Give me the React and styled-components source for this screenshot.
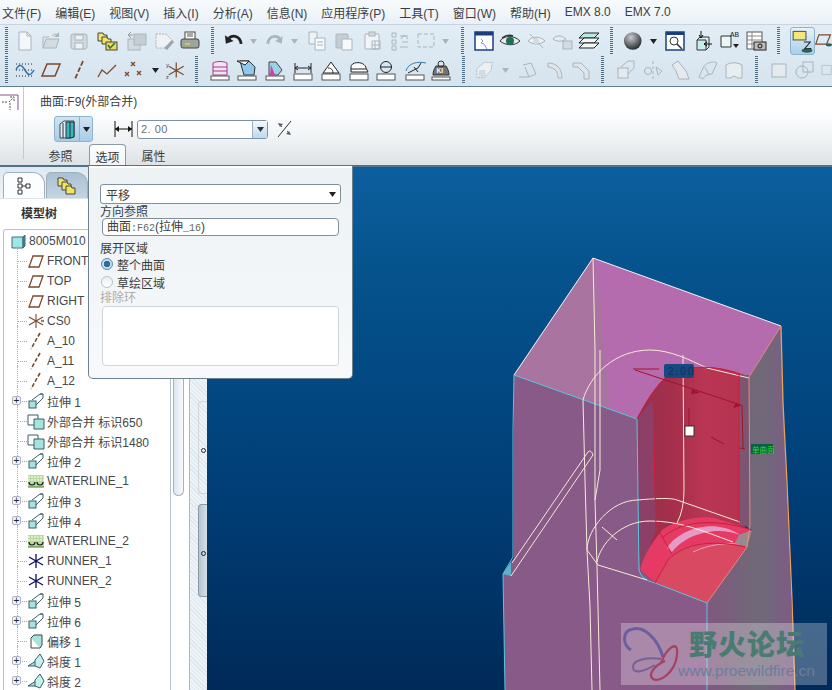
import React from 'react';
import styled, { createGlobalStyle } from 'styled-components';

const GlobalStyle = createGlobalStyle`
  html, body { margin: 0; padding: 0; background: #fff; }
  body { font-family: "Liberation Sans", "Noto Sans CJK SC", sans-serif; }
`;

const Page = styled.div`
  width: 832px;
  height: 690px;
  position: relative;
  overflow: hidden;
  display: flex;
  flex-direction: column;
  font-size: 12px;
  color: #3c3f42;
`;

const MenuBar = styled.div`
  height: 25px;
  flex: none;
  display: flex;
  align-items: center;
  gap: 14px;
  padding-left: 2px;
  box-sizing: border-box;
  background: linear-gradient(#f8fbfd, #e9f0f6);
  border-bottom: 1px solid #c4d4e1;
  white-space: nowrap;
`;

const ToolArea = styled.div`
  height: 62px;
  flex: none;
  box-sizing: border-box;
  padding-top: 1px;
  background: linear-gradient(#e2edf5, #d6e4ef);
  border-bottom: 1px solid #5f7d91;
  display: flex;
  flex-direction: column;
  overflow: hidden;
`;

const ToolRow = styled.div`
  height: 29px;
  flex: none;
  display: flex;
  align-items: center;
  white-space: nowrap;
`;

const Grip = styled.div`
  flex: none;
  width: ${p => p.$w}px;
  height: 27px;
  display: flex;
  justify-content: center;
  &::before {
    content: '';
    width: 3px;
    height: 27px;
    background: repeating-linear-gradient(#4f6f86 0 1px, transparent 1px 2px);
  }
`;

const Tool = styled.div`
  flex: none;
  width: ${p => p.$w}px;
  height: 26px;
  display: flex;
  align-items: center;
  justify-content: center;
`;

const ToolActive = styled(Tool)`
  & > svg {
    background: linear-gradient(#e8f2fa, #a9cfe9);
    border: 1px solid #8eb2cb;
    border-radius: 3px;
  }
`;

const Dashboard = styled.div`
  height: 80px;
  flex: none;
  position: relative;
  display: flex;
  background: linear-gradient(#fff 0, #fff 30%, #eef1f3 70%, #dde2e5 100%);
  border-bottom: 2px solid #4f7289;
  box-sizing: border-box;
`;

const DashCorner = styled.div`
  width: 24px;
  flex: none;
  height: 72px;
  border-right: 1px solid #c3c9cd;
  box-sizing: border-box;
  padding-top: 6px;
`;

const DashBody = styled.div`
  flex: 1;
  display: flex;
  flex-direction: column;
  padding-left: 16px;
`;

const DashTitle = styled.div`
  height: 28px;
  display: flex;
  align-items: center;
  box-sizing: border-box;
`;

const DashControls = styled.div`
  height: 30px;
  display: flex;
  align-items: center;
  padding-left: 14px;
`;

const SplitButton = styled.div`
  width: 39px;
  height: 26px;
  box-sizing: border-box;
  border: 1px solid #8fb3cc;
  border-radius: 3px;
  background: linear-gradient(#cfe3f2, #a8cde8);
  display: flex;
  align-items: center;
  & > span {
    width: 12px;
    height: 24px;
    border-left: 1px solid #8fb3cc;
    display: flex;
    align-items: center;
    justify-content: center;
    margin-left: auto;
  }
`;

const DimIcon = styled.div`
  margin-left: 21px;
  width: 19px;
  display: flex;
`;

const ValueInput = styled.div`
  margin-left: 4px;
  width: 131px;
  height: 19px;
  box-sizing: border-box;
  border: 1px solid #7d93a3;
  border-radius: 3px;
  background: #fff;
  display: flex;
  align-items: center;
  padding-left: 3px;
  font-size: 11px;
  color: #6a6f73;
  letter-spacing: 0.5px;
`;

const InputDrop = styled.span`
  margin-left: auto;
  width: 14px;
  height: 17px;
  border-left: 1px solid #9fb2c0;
  background: linear-gradient(#f4f9fc, #bcd9ee);
  display: flex;
  align-items: center;
  justify-content: center;
`;

const FlipIcon = styled.div`
  margin-left: 8px;
  display: flex;
`;

const DashTabs = styled.div`
  display: flex;
  height: 20px;
  margin-top: 1px;
  align-items: flex-end;
`;

const DashTab = styled.div`
  width: ${p => p.$w}px;
  height: 21px;
  box-sizing: border-box;
  text-align: center;
  line-height: 26px;
  margin-right: ${p => p.$gap || 0}px;
  ${p => p.$on && `
    background: linear-gradient(#fff, #f1f4f6);
    border: 1px solid #8b9aa5;
    border-bottom: 0;
    border-radius: 4px 4px 0 0;
    color: #33363a;
    position: relative;
    z-index: 3;
  `}
`;

const Work = styled.div`
  flex: 1;
  min-height: 0;
  display: flex;
`;

const Navigator = styled.div`
  width: 190px;
  flex: none;
  display: flex;
  flex-direction: column;
  background: #fff;
  border-right: 1px solid #a9b8c3;
  box-sizing: border-box;
`;

const NavTabs = styled.div`
  height: 32px;
  flex: none;
  display: flex;
  align-items: flex-end;
  padding-left: 3px;
  gap: 1px;
  background: linear-gradient(#dfe9f1, #edf2f6);
  border-bottom: 1px solid #dbe3ea;
  box-sizing: border-box;
`;

const NavTab = styled.div`
  width: ${p => p.$w}px;
  height: 26px;
  box-sizing: border-box;
  border: 1px solid #9fb0bd;
  border-bottom: 0;
  border-radius: 5px 12px 0 0;
  background: ${p => (p.$on ? '#fbfdfe' : 'linear-gradient(#a9c0d2, #c4d5e2)')};
  display: flex;
  align-items: center;
  justify-content: center;
`;

const NavTitle = styled.div`
  height: 30px;
  flex: none;
  padding-left: 21px;
  font-weight: bold;
  line-height: 30px;
  color: #333;
`;

const NavBody = styled.div`
  flex: 1;
  min-height: 0;
  display: flex;
`;

const TreeBox = styled.div`
  width: 168px;
  margin-left: 3px;
  flex: none;
  box-sizing: border-box;
  border: 1px solid #b4c2cc;
  border-bottom: 0;
  border-radius: 3px 0 0 0;
  padding-top: 1px;
  overflow: hidden;
`;

const TreeRow = styled.div`
  height: 20px;
  display: flex;
  align-items: center;
  position: relative;
  white-space: nowrap;
  padding-left: ${p => (p.$root ? 5 : 23)}px;
  &::before {
    content: '';
    display: ${p => (p.$root ? 'none' : 'block')};
    position: absolute;
    left: 13px;
    top: 10px;
    width: 10px;
    border-top: 1px dotted #a9a9a9;
  }
  &::after {
    content: '';
    display: ${p => (p.$root ? 'none' : 'block')};
    position: absolute;
    left: 13px;
    top: -5px;
    height: 20px;
    border-left: 1px dotted #b5b5b5;
    z-index: 0;
  }
`;

const Expander = styled.span`
  position: absolute;
  left: 8px;
  top: 5px;
  width: 9px;
  height: 9px;
  box-sizing: border-box;
  border: 1px solid #a9b7c2;
  border-radius: 2px;
  background: #eef3f7;
  z-index: 1;
  font-size: 10px;
  line-height: 7px;
  text-align: center;
  color: #222;
`;

const TreeIcon = styled.span`
  width: 18px;
  height: 18px;
  flex: none;
  display: flex;
  margin-right: 2px;
`;

const TreeText = styled.span`
  color: #44484b;
`;

const ScrollTrack = styled.div`
  flex: 1;
  padding-left: 2px;
`;

const ScrollThumb = styled.div`
  width: 11px;
  height: 266px;
  margin-top: 1px;
  box-sizing: border-box;
  border: 1px solid #a5b3bd;
  border-top: 0;
  border-radius: 0 0 6px 6px;
  background: linear-gradient(90deg, #dbe7ef, #f7fafc);
`;

const Sash = styled.div`
  width: 17px;
  flex: none;
  background: repeating-linear-gradient(45deg, #dbe6ee 0 1px, #edf3f7 1px 3px);
  position: relative;
`;

const SashPanel = styled.div`
  position: absolute;
  left: 8px;
  right: 0;
  top: ${p => p.$top}px;
  height: ${p => p.$h}px;
  box-sizing: border-box;
  border: 1px solid ${p => (p.$dark ? '#8b99a5' : '#cdd8e0')};
  border-right: 0;
  border-radius: 4px 0 0 4px;
  background: ${p => (p.$dark ? 'linear-gradient(90deg, #b6c4cf, #d5e0e8)' : 'transparent')};
  &::after {
    content: '';
    position: absolute;
    left: 2px;
    top: 46px;
    width: 3px;
    height: 3px;
    border: 1px solid #223;
    border-radius: 50%;
  }
`;

const Viewport = styled.div`
  flex: 1;
  position: relative;
  background: linear-gradient(#0c5f9e 0, #05538d 20%, #013f78 60%, #002a58 100%);
  overflow: hidden;
`;

const ModelLayer = styled.div`
  position: absolute;
  left: 207px;
  top: 168px;
  z-index: 1;
  & > svg { display: block; }
`;

const Watermark = styled.div`
  position: absolute;
  left: 621px;
  top: 623px;
  width: 206px;
  height: 62px;
  background: rgba(255, 255, 255, 0.28);
  display: flex;
  z-index: 4;
`;

const WaterLogo = styled.div`
  width: 68px;
  flex: none;
  display: flex;
`;

const WaterText = styled.div`
  display: flex;
  flex-direction: column;
  padding-top: 3px;
`;

const WaterTitle = styled.div`
  font-size: 28px;
  font-weight: 900;
  line-height: 34px;
  letter-spacing: 1px;
  color: #4a7b72;
  font-family: "Noto Sans CJK SC", sans-serif;
`;

const WaterUrl = styled.div`
  font-size: 15.5px;
  line-height: 18px;
  margin-top: 2px;
  margin-left: -11px;
  color: #6d7c9c;
`;

const OptionsPopup = styled.div`
  position: absolute;
  left: 88px;
  top: 166px;
  width: 265px;
  height: 213px;
  box-sizing: border-box;
  padding: 18px 11px 0 11px;
  background: linear-gradient(#edf2f5, #f7f9fa);
  border: 1px solid #70818e;
  border-top: 0;
  border-radius: 0 0 5px 5px;
  box-shadow: inset 0 2px 0 #fff;
  z-index: 2;
  display: flex;
  flex-direction: column;
  color: #3a3d40;
`;

const SelectBox = styled.div`
  height: 20px;
  flex: none;
  box-sizing: border-box;
  border: 1px solid #7f8f9b;
  border-radius: 3px;
  background: #fff;
  display: flex;
  align-items: center;
  justify-content: space-between;
  padding: 0 4px 0 5px;
`;

const FieldLabel = styled.div`
  height: 14px;
  line-height: 16px;
  margin-top: ${p => p.$top || 0}px;
  color: ${p => (p.$muted ? '#a9adb0' : 'inherit')};
`;

const RefInput = styled.div`
  height: 18px;
  flex: none;
  margin: 0 2px;
  box-sizing: border-box;
  border: 1px solid #7f8f9b;
  border-radius: 4px;
  background: #fff;
  padding-left: 4px;
  line-height: 16px;
  & > em {
    font-style: normal;
    font-family: "Liberation Mono", monospace;
    font-size: 10px;
    color: #666;
  }
`;

const RadioRow = styled.div`
  height: 18px;
  display: flex;
  align-items: center;
  gap: 4px;
  padding-left: 1px;
`;

const Radio = styled.span`
  width: 12px;
  height: 12px;
  box-sizing: border-box;
  border-radius: 50%;
  border: 1px solid ${p => (p.$on ? '#5b8cab' : '#b4c2cc')};
  background: ${p =>
    p.$on ? 'radial-gradient(circle, #2f6f9b 0 3px, #c6dded 3.5px)' : 'linear-gradient(#e9eef2, #fff)'};
`;

const ExcludeBox = styled.div`
  height: 60px;
  margin: 2px 2px 0;
  flex: none;
  box-sizing: border-box;
  border: 1px solid #cfd6db;
  border-radius: 4px;
  background: #fff;
`;

const menus = ['文件(F)', '编辑(E)', '视图(V)', '插入(I)', '分析(A)', '信息(N)', '应用程序(P)', '工具(T)', '窗口(W)', '帮助(H)', 'EMX 8.0', 'EMX 7.0'];

const Ic = ({ s = 22, vb = 22, children }) => (
  <svg width={s} height={s} viewBox={`0 0 ${vb} ${vb}`} fill="none">{children}</svg>
);

const G = '#aab4bb';
const GF = '#d3dbe1';
const BR = '#7a4a2c';

const icons = {
  newf: <path d="M5 2h8l4 4v14H5z M13 2v4h4" stroke={G} fill="#f4f7f9" />,
  open: <><path d="M2 18l3-9h13l-3 9z" fill={GF} stroke={G} /><path d="M2 18V7h6M11 6c3-3 5-2 7 0" stroke={G} /><path d="M18 2v5h-5z" fill={G} /></>,
  save: <><rect x="3" y="4" width="16" height="15" rx="2" fill={GF} stroke={G} /><rect x="7" y="5" width="8" height="5" fill="#eef2f5" stroke={G} /><rect x="7" y="13" width="8" height="6" fill="#eef2f5" stroke={G} /></>,
  folders: <><path d="M2 3h5l1 2h3v6H2z" fill="#f2e36b" stroke="#444" /><path d="M6 7h5l1 2h3v5H6z" fill="#f2e36b" stroke="#444" /><rect x="10" y="12" width="11" height="8" fill="#f4d65a" stroke="#444" /><path d="M12 15l2 3 5-5" stroke="#1d7b2f" strokeWidth="1.5" /></>,
  saveas: <><rect x="3" y="9" width="12" height="11" fill={GF} stroke={G} /><rect x="9" y="4" width="12" height="11" fill="#c6ced5" stroke={G} /><path d="M3 5h5M3 5l3-3M3 5l3 3" stroke="#8c97a0" /></>,
  erase: <><path d="M3 4h10l6 6-6 8H3z" stroke={G} strokeDasharray="2 1" fill="#eef2f5" /><path d="M11 18l8-8 2 2-7 8z" fill="#9aa5ad" /></>,
  print: <><rect x="6" y="2" width="10" height="8" fill="#fff" stroke="#444" /><rect x="2" y="9" width="18" height="9" rx="2" fill="#9ba59a" stroke="#444" /><rect x="6" y="13" width="5" height="2" fill="#d8c25a" /><path d="M8 4h6M8 6h6" stroke="#555" /></>,
  undo: <><path d="M6 8c5-4 12-2 13 6" stroke="#222" strokeWidth="3" /><path d="M2 5l1 9 8-3z" fill="#222" /></>,
  redo: <><path d="M17 8c-5-4-12-2-13 6" stroke={G} strokeWidth="3" /><path d="M20 6l-1 8-7-3z" fill={G} /></>,
  caret: <path d="M1 3h7L4.500 8z" fill="#222" />,
  caretg: <path d="M1 3h7L4.500 8z" fill="#aab4bb" />,
  copy: <><path d="M3 2h8v12H3z" fill="#eef2f5" stroke={G} /><path d="M9 8h10v12H9z" fill="#f6f8fa" stroke={G} /><path d="M11 12h6M11 15h6" stroke={G} /></>,
  paste: <><rect x="3" y="4" width="12" height="14" rx="1" fill="#c5ced5" stroke={G} /><path d="M9 9h10v11H9z" fill="#f6f8fa" stroke={G} /></>,
  pastes: <><rect x="3" y="4" width="14" height="15" rx="1" fill="#f2f5f7" stroke={G} /><rect x="7" y="2" width="6" height="4" fill={GF} stroke={G} /><path d="M10 11h8v8h-8zM13 11v8M10 15h8" stroke={G} /></>,
  regen: <><path d="M3 3h4v4H3zM3 10h4v4H3zM3 16h4v4H3z" stroke={G} /><path d="M11 6h8M13 12h6M11 17h8" stroke={G} /><path d="M12 9l3-4 4 4" stroke={G} /></>,
  select: <rect x="3" y="4" width="16" height="13" stroke={G} strokeDasharray="4 2" />,
  win: <><rect x="2" y="2" width="18" height="18" fill="#fff" stroke="#1b3f7e" strokeWidth="1.500" /><rect x="2" y="2" width="18" height="3.500" fill="#1b3f7e" /><path d="M8 9l2 2-2 2 3 1 3 5" stroke="#6aa7c9" /></>,
  eye: <><path d="M1 11c4-6 14-6 20 0-5 5-14 5-20 0z" fill="#e8ece8" stroke="#333" /><circle cx="11" cy="11" r="4" fill="#1d6f56" /><path d="M3 8c4-3 8-3 11-2" stroke="#333" strokeWidth="1.500" /></>,
  eyeoff: <><path d="M3 11c4-5 12-5 17 0-5 4-12 4-17 0z" stroke={G} fill="#eef2f5" /><path d="M5 4l13 14" stroke={G} /><circle cx="11" cy="11" r="3" fill={GF} /></>,
  eyecam: <><path d="M1 9c3-4 9-4 13 0-4 3-9 3-13 0z" stroke={G} fill="#e6ebee" /><rect x="11" y="11" width="9" height="8" fill={GF} stroke={G} /></>,
  layers: <><path d="M6 3h15l-5 5H1z" fill="#b6ece4" stroke="#222" /><path d="M6 8h15l-5 5H1z" fill="#f0f7f5" stroke="#222" /><path d="M6 13h15l-5 5H1z" fill="#f0f7f5" stroke="#222" /></>,
  sphere: <><defs><radialGradient id="sph" cx="0.400" cy="0.300" r="0.800"><stop offset="0" stopColor="#c9cdd0" /><stop offset="0.600" stopColor="#5b6063" /><stop offset="1" stopColor="#15181a" /></radialGradient></defs><circle cx="11" cy="11" r="9" fill="url(#sph)" /></>,
  zoomw: <><rect x="2" y="2" width="18" height="18" fill="#fff" stroke="#1b3f7e" strokeWidth="1.500" /><rect x="2" y="2" width="18" height="3" fill="#1b3f7e" /><circle cx="10" cy="11" r="4" stroke="#333" /><path d="M13 14l5 5" stroke="#333" strokeWidth="1.500" /></>,
  orient: <><path d="M6 10h9v10H6z" fill="#c6efe9" stroke="#333" /><path d="M6 10l3-3h9v10l-3 3" stroke="#333" /><path d="M10 1v7M8 5l2 3 2-3M21 14h-8M16 12l-3 2 3 2" stroke="#111" /></>,
  ab: <><path d="M2 6h10v11H2z" fill="#eaf7f5" stroke="#333" /><text x="11" y="7" fontSize="7.500" fill="#222" fontFamily="Liberation Mono">AB</text><path d="M14 14l3 4 3-4z" fill="#222" /></>,
  sheet: <><rect x="2" y="2" width="15" height="17" fill="#fff" stroke="#555" /><path d="M2 6h15M2 10h15M2 14h15M7 2v17" stroke="#888" /><rect x="9" y="12" width="12" height="8" fill="#bbb" stroke="#222" /><circle cx="15" cy="16" r="2" stroke="#111" /></>,
  note: <><rect x="2" y="2" width="12" height="8" fill="#f4e77a" stroke="#555" /><path d="M12 12h6l-5 6h6" stroke="#222" /><ellipse cx="15" cy="20" rx="5" ry="2" fill="#2d5e5e" /></>,
  plane2: <><path d="M5 3h15l-5 12H1z" stroke={BR} strokeWidth="1.500" /><ellipse cx="18" cy="16" rx="4" ry="2" fill="#2d5e5e" /></>,
  datum: <><path d="M2 5h18M2 11h18M2 17h18" stroke="#222" strokeDasharray="1 2" /><path d="M2 11c3-7 6-5 9 0s5 7 9 0" stroke="#2c6fb0" strokeWidth="1.500" /></>,
  plane: <path d="M7 5h13l-5 12H2z" stroke={BR} strokeWidth="1.500" />,
  axis: <path d="M15 2L7 20" stroke={BR} strokeWidth="1.800" strokeDasharray="5 2" />,
  curve: <path d="M2 18l4-7 5 4 9-9" stroke={BR} strokeWidth="1.300" />,
  points: <path d="M9 3l4 4m0-4l-4 4M3 13l4 4m0-4l-4 4M15 12l4 4m0-4l-4 4" stroke={BR} strokeWidth="1.300" />,
  csys: <><path d="M11 3v16M3 7l16 9M3 16l16-9" stroke={BR} strokeWidth="1.300" /><text x="0" y="8" fontSize="6" fill="#333" fontFamily="Liberation Sans">y</text><text x="0" y="21" fontSize="6" fill="#333" fontFamily="Liberation Sans">z</text></>,
  ruler1: <><path d="M4 4c4-2 10-2 14 0v12H4zM4 8h14M4 12h14" stroke="#a23c8e" fill="#f1e3ef" /><rect x="2" y="17" width="18" height="4" fill="#fff" stroke="#555" /></>,
  ruler2: <><path d="M4 2h9l6 6-1 8H8z" fill="#8fc9ec" stroke="#333" /><path d="M1 2h12l-4 4z" fill="#fff" stroke="#222" /><rect x="2" y="17" width="18" height="4" fill="#fff" stroke="#555" /></>,
  ruler3: <><path d="M5 3h7l6 8-4 5H5z" fill="#9bd4e3" stroke="#444" /><path d="M7 6l4 10H6z" fill="#d33caf" /><rect x="2" y="17" width="18" height="4" fill="#fff" stroke="#555" /></>,
  ruler4: <><path d="M3 4v10M19 4v10M3 9h16M3 9l3-2M3 9l3 2M19 9l-3-2M19 9l-3 2" stroke="#222" /><rect x="2" y="15" width="18" height="6" fill="#fff" stroke="#555" /></>,
  ruler5: <><path d="M3 14L11 3l8 11zM8 9c2 0 5 1 5 5" stroke="#222" fill="#fff" /><rect x="2" y="15" width="18" height="6" fill="#fff" stroke="#555" /></>,
  ruler6: <><path d="M3 13V8c0-6 14-6 15 1l2 4zM3 10h15" stroke="#222" fill="#fff" /><rect x="2" y="15" width="18" height="6" fill="#fff" stroke="#555" /></>,
  ruler7: <><circle cx="11" cy="8" r="5.500" stroke="#222" /><path d="M5 8h12" stroke="#222" /><rect x="2" y="15" width="18" height="6" fill="#fff" stroke="#555" /></>,
  ruler8: <><path d="M2 12c2-8 12-10 20-8" stroke="#3a7ea7" /><path d="M4 14L14 9l3-5M10 8l4 5" stroke="#222" /><rect x="2" y="16" width="18" height="5" fill="#fff" stroke="#555" /></>,
  kg: <><path d="M6 7c-2 3-3 6-3 9h16c0-3-1-6-3-9z" fill="#6f7478" stroke="#333" /><circle cx="11" cy="5" r="3" stroke="#333" /><text x="6.500" y="14" fontSize="6.500" fontWeight="bold" fill="#fff" fontFamily="Liberation Sans">KI</text><rect x="2" y="18" width="18" height="3" fill="#fff" stroke="#555" /></>,
  gmirror: <><path d="M3 10l8-7h8l-1 8-7 8H3z" stroke={G} strokeDasharray="2 1" fill="#edf1f4" /><rect x="5" y="11" width="7" height="7" fill={GF} /></>,
  gext: <><path d="M2 18h10l7-3-5-11-8 2" stroke={G} /><path d="M12 18L8 8" stroke={G} /></>,
  gcurve: <path d="M4 4c8 0 14 5 14 15h-4c0-7-3-10-10-11z" stroke={G} fill="#dfe5e9" />,
  gchamfer: <path d="M3 4h8l8 8v8h-5v-6L8 8H3z" stroke={G} fill="#dfe5e9" />,
  gbox: <><rect x="3" y="9" width="10" height="10" stroke={G} fill="#e5eaee" /><path d="M6 8l7-6h6v7l-6 6" stroke={G} /></>,
  gmir: <><circle cx="6" cy="12" r="3.500" stroke={G} /><path d="M11 2v18" stroke={G} strokeDasharray="3 2" /><path d="M14 8l6 4-4 4z" stroke={G} /></>,
  gmove: <path d="M3 6l6-4 8 10 3 8H10L7 12z" stroke={G} fill="#e5eaee" />,
  gwarp: <path d="M2 18l5-11c4-4 10-5 13-3l-5 11c-3 0-7 1-9 5zM8 8l4 8" stroke={G} />,
  gsurf: <path d="M3 6c5-3 11-3 16 0v13h-4l-4-2-4 2H3z" stroke={G} fill="#e8edf0" />,
  gsquare: <rect x="4" y="5" width="14" height="13" stroke={G} fill="#e5eaee" />,
  gintersect: <><circle cx="8" cy="13" r="6" stroke={G} /><rect x="9" y="3" width="10" height="10" stroke={G} /></>,
  gedge: <path d="M6 4h14v14H6z" stroke={G} />,
};

// icon centres read off the screenshot
const row1 = [
  ['grip', 1], ['newf', 24], ['open', 52], ['save', 79], ['folders', 107], ['saveas', 135], ['erase', 165], ['print', 192],
  ['grip', 211], ['undo', 234], ['caretg', 253], ['redo', 275], ['caretg', 294], ['copy', 315], ['paste', 344], ['pastes', 373], ['regen', 400], ['select', 427], ['caretg', 448],
  ['grip', 460], ['win', 483], ['eye', 510], ['eyeoff', 536], ['eyecam', 563], ['layers', 591],
  ['grip', 610], ['sphere', 633], ['caret', 653], ['zoomw', 673], ['orient', 702], ['ab', 729], ['sheet', 758],
  ['grip', 778], ['note', 801, true], ['plane2', 829],
];
const row2 = [
  ['grip', 1], ['datum', 24], ['plane', 51], ['axis', 78], ['curve', 108], ['points', 135], ['caret', 155], ['csys', 176],
  ['grip', 196], ['ruler1', 219], ['ruler2', 247], ['ruler3', 275], ['ruler4', 303], ['ruler5', 332], ['ruler6', 358], ['ruler7', 386], ['ruler8', 415], ['kg', 442],
  ['grip', 463], ['gmirror', 485], ['caretg', 505], ['gext', 526], ['gcurve', 555], ['gchamfer', 583],
  ['grip', 601], ['gbox', 624], ['gmir', 653], ['gmove', 680], ['gwarp', 708], ['gsurf', 736],
  ['grip', 755], ['gsquare', 778], ['gintersect', 805], ['gedge', 830],
];

const renderRow = row => {
  // each slot's edges sit halfway to its neighbours, so the icon lands near its centre
  const edges = row.map(([, c], i) => (i === 0 ? 0 : (row[i - 1][1] + c) / 2));
  return row.map(([name, c, active], i) => {
    const right = i === row.length - 1 ? 832 : edges[i + 1];
    const w = right - edges[i];
    if (name === 'grip') return <Grip key={i} $w={w} />;
    const Box = active ? ToolActive : Tool;
    const small = name.startsWith('caret');
    return (
      <Box key={i} $w={w}>
        {small ? <Ic s={9} vb={9}>{icons[name]}</Ic> : <Ic s={active ? 26 : 22}>{icons[name]}</Ic>}
      </Box>
    );
  });
};

const treeIcons = {
  part: <><path d="M3 5h11v11H3z" fill="#9ce7ea" stroke="#4a6a78" /><path d="M14 5l2-2v11l-2 2z" fill="#3f8a9c" stroke="#3f6a78" /></>,
  plane: <path d="M6 4h10l-4 11H2z" stroke={BR} strokeWidth="1.300" />,
  csys: <><path d="M9 2v14M2 5l14 8M2 13l14-8" stroke={BR} strokeWidth="1.100" /><path d="M14 8l3 2m0-2l-3 2" stroke="#666" /></>,
  axis: <path d="M13 1L4 17" stroke={BR} strokeWidth="1.600" strokeDasharray="4 2" />,
  extrude: <><rect x="2" y="9" width="7" height="7" fill="#a6e3df" stroke="#3a5f66" /><path d="M5 8l8-6h3v4l-7 7M13 2h3" stroke="#3a5f66" fill="none" /></>,
  merge: <><path d="M1 3h10v10H1z" fill="#fff" stroke="#3a5f66" /><path d="M7 7h10v10H7z" fill="#a6e3df" stroke="#3a5f66" /></>,
  water: <><path d="M1 3h16v12H1z" fill="#b9d99f" /><path d="M1 5h16M1 8h16" stroke="#fff" strokeDasharray="2 1" /><path d="M2 10a3 3 0 0 0 6 0M10 10a3 3 0 0 0 6 0" stroke="#222" strokeWidth="1.200" /><path d="M1 15h16" stroke="#3e7a2e" /></>,
  runner: <path d="M9 2v14M2 5l14 8M2 13l14-8" stroke="#0c0c5c" strokeWidth="1.300" />,
  offset: <><path d="M4 6h9v10H4z" fill="#fff" stroke="#444" /><path d="M4 6l3-3h8v10l-2 3" fill="#a6e3df" stroke="#444" /></>,
  draft: <><path d="M1 14h11V7z" fill="#a6e3df" stroke="#3a5f66" /><path d="M8 8l5-6 4 7-4 7-5-2z" fill="#c6f0ec" stroke="#3a5f66" /></>,
};

const tree = [
  ['part', '8005M010', false, true],
  ['plane', 'FRONT'], ['plane', 'TOP'], ['plane', 'RIGHT'], ['csys', 'CS0'],
  ['axis', 'A_10'], ['axis', 'A_11'], ['axis', 'A_12'],
  ['extrude', '拉伸 1', true], ['merge', '外部合并 标识650'], ['merge', '外部合并 标识1480'],
  ['extrude', '拉伸 2', true], ['water', 'WATERLINE_1'], ['extrude', '拉伸 3', true], ['extrude', '拉伸 4', true],
  ['water', 'WATERLINE_2'], ['runner', 'RUNNER_1'], ['runner', 'RUNNER_2'],
  ['extrude', '拉伸 5', true], ['extrude', '拉伸 6', true], ['offset', '偏移 1'],
  ['draft', '斜度 1', true], ['draft', '斜度 2', true],
];

function ModelDrawing() {
  return (
    <svg width="625" height="522" viewBox="207 168 625 522" fill="none">
      <defs>
        <linearGradient id="cyl" x1="0" x2="1" y1="0" y2="0">
          <stop offset="0" stopColor="#9a2f4c" />
          <stop offset="0.3" stopColor="#a32f4b" />
          <stop offset="0.6" stopColor="#b93553" />
          <stop offset="1" stopColor="#b53350" />
        </linearGradient>
        <linearGradient id="right" x1="0" x2="1" y1="0" y2="0">
          <stop offset="0" stopColor="#80587f" />
          <stop offset="0.6" stopColor="#6f6a78" />
          <stop offset="1" stopColor="#7f5a86" />
        </linearGradient>
        <pattern id="dots" width="2" height="2" patternUnits="userSpaceOnUse">
          <rect width="2" height="2" fill="#b56cae" />
          <rect width="1" height="1" fill="#a8749f" />
        </pattern>
      </defs>
      {/* right wall */}
      <path d="M781 326L749 377L739 377L739 522L752 530L747 545L707 603L707 690L795 690L788 520L783 403Z" fill="url(#right)" />
      {/* lower left block and left face */}
      <path d="M514 375L637 419L640 570L655 583L707 603L707 690L505 690L503 574L514 558Z" fill="#885a88" />
      {/* top face */}
      <path d="M593 258L781 326L749 377C725 367 700 365 677 370C660 378 648 398 637 419L514 375Z" fill="#b56cae" />
      <path d="M593 258L514 375L610 409L600 300Z" fill="url(#dots)" />
      {/* pocket wall and cylinder */}
      <path d="M637 419C648 398 660 378 677 370C700 365 725 367 739 373L749 377L749 525L640 570Z" fill="url(#cyl)" />
      <path d="M637 419L653 400L656 530L640 570Z" fill="#8c4068" />
      <path d="M739 375H749V525H739Z" fill="#7c5570" />
      {/* fillet + floor */}
      <path d="M640 570C645 550 655 540 662 530C675 520 700 515 715 518L752 530L747 547L707 603L655 583Z" fill="#e53a63" />
      <path d="M655 583L668 560C680 545 710 538 745 547L707 603Z" fill="#d94a62" />
      <path d="M667 548C680 528 715 518 740 535C715 525 685 535 672 552Z" fill="#e79ac5" />
      <path d="M693 552C710 544 725 543 740 544" stroke="#eea2bf" />
      <path d="M739 535L752 530L747 547L735 543Z" fill="#9a8a90" />
      {/* slot on left side */}
      <path d="M511 562L503 574L511 576Z" fill="#5fb0cc" />
      {/* cyan edges */}
      <path d="M514 375L637 419L639 570Q641 580 655 583L707 603L707 690M514 375L513 430V557L503 574L505 690" stroke="#58c7de" />
      {/* white edges */}
      <path d="M593 258L781 326M593 258L514 375" stroke="#f4f4f4" />
      <path d="M593 258L595 350L595 500L597 567L600 690" stroke="#f5ecd8" />
      <path d="M600 350L600 470L595 500" stroke="#f5ecd8" />
      <path d="M583 400C590 375 615 350 650 350C670 350 690 360 707 368L749 378" stroke="#f5ecd8" />
      <path d="M583 400L585 480L587 550L590 607L592 690" stroke="#f5ecd8" />
      <path d="M683 355L684 490Q684 510 677 523" stroke="#f5e9c8" />
      <path d="M512 563L588 452M511 576L593 455M588 452Q591 449 593 455" stroke="#f2e8d8" />
      <path d="M587 550C587 530 610 500 638 500C660 498 672 498 677 500L740 522" stroke="#f5ecd8" />
      <path d="M597 562C600 545 620 521 650 521C680 521 700 530 733 542" stroke="#f5ecd8" />
      <path d="M587 550L598 565L647 580" stroke="#f5ecd8" />
      <path d="M602 527L617 540" stroke="#f5ecd8" />
      {/* orange edges */}
      <path d="M781 326L783 403L787 483L792 600L795 690" stroke="#e9a05e" strokeWidth="1.300" />
      <path d="M749 377L781 326M749 377L750 525L747 547L707 603" stroke="#e28f76" />
      {/* red edges */}
      <path d="M637 419C648 398 660 378 677 370C700 365 725 367 739 375" stroke="#cf1d3f" />
      <path d="M653 400L656 530M739 373V522M662 538C680 522 710 517 752 530M655 583L668 560C685 542 715 540 745 547M660 533L672 554" stroke="#cf1d3f" />
      {/* dimension */}
      <path d="M633 369L659 369M635 370L741 405M689 408V430M742 405L743 449M740 448L745 449M711 437L724 444" stroke="#a5112c" />
      <path d="M692 389L700 393L691 394ZM736 403L741 406L733 408Z" fill="#a5112c" />
      <rect x="664" y="364" width="30" height="14" rx="2" fill="#17487f" />
      <text x="668" y="374.500" fontSize="10" fill="#0d2f5c" fontFamily="Liberation Sans" letterSpacing="2">2.00</text>
      <rect x="685" y="426" width="9" height="10" fill="#fff" stroke="#333" />
      <rect x="751" y="444" width="22" height="10" fill="#0d5c4b" />
      <text x="752" y="452.500" fontSize="7.500" fill="#34d62c" fontFamily="Noto Sans CJK SC">单曲面</text>
    </svg>
  );
}

export default function App() {
  return (
    <Page>
      <GlobalStyle />
      <MenuBar>
        {menus.map(m => <span key={m}>{m}</span>)}
      </MenuBar>
      <ToolArea>
        <ToolRow>{renderRow(row1)}</ToolRow>
        <ToolRow>{renderRow(row2)}</ToolRow>
      </ToolArea>
      <Dashboard>
        <DashCorner>
          <svg width="20" height="18" viewBox="0 0 20 18" fill="none">
            <path d="M0 2h18v15" stroke="#8a4f9a" />
            <path d="M2 9h5M9 9l4-4M10 4h4v4M10 10v7" stroke="#555" strokeDasharray="2 1" />
          </svg>
        </DashCorner>
        <DashBody>
          <DashTitle>曲面:F9(外部合并)</DashTitle>
          <DashControls>
            <SplitButton>
              <svg width="24" height="22" viewBox="0 0 24 22" fill="none">
                <path d="M5 6l4-3h10v16l-4 1H5z" fill="#e6eef2" stroke="#444" />
                <path d="M11 4h8v15l-4 1H11z" fill="#3bb6bb" stroke="#234" />
                <path d="M8 5v15M15 4v16" stroke="#234" />
              </svg>
              <span>
                <svg width="7" height="5" viewBox="0 0 7 5"><path d="M0 0h7L3.500 5z" fill="#222" /></svg>
              </span>
            </SplitButton>
            <DimIcon>
              <svg width="19" height="18" viewBox="0 0 19 18" fill="none">
                <path d="M1 1v16M18 1v16M1 9h17" stroke="#111" />
                <path d="M1 9l4-3v6zM18 9l-4-3v6z" fill="#111" />
              </svg>
            </DimIcon>
            <ValueInput>
              2. 00
              <InputDrop>
                <svg width="7" height="5" viewBox="0 0 7 5"><path d="M0 0h7L3.500 5z" fill="#333" /></svg>
              </InputDrop>
            </ValueInput>
            <FlipIcon>
              <svg width="17" height="18" viewBox="0 0 17 18" fill="none">
                <path d="M15 1L2 17" stroke="#333" />
                <path d="M2 3l5 1-3 3zM15 15l-5-1 3-3z" fill="#4c5a64" />
                <path d="M3 4l3 3M14 14l-3-3" stroke="#4c5a64" />
              </svg>
            </FlipIcon>
          </DashControls>
          <DashTabs>
            <DashTab $w={41} $gap={8}>参照</DashTab>
            <DashTab $w={37} $on $gap={8}>选项</DashTab>
            <DashTab $w={39}>属性</DashTab>
          </DashTabs>
        </DashBody>
      </Dashboard>
      <Work>
        <Navigator>
          <NavTabs>
            <NavTab $w={42} $on>
              <svg width="16" height="20" viewBox="0 0 16 20" fill="none">
                <path d="M2 2h4v4H2zM2 8h4v4H2zM2 14h4v4H2zM10 8h4v4h-4zM6 10h4" stroke="#333" />
              </svg>
            </NavTab>
            <NavTab $w={42}>
              <svg width="20" height="20" viewBox="0 0 20 20" fill="none">
                <path d="M1 2h5l1 2h3v6H1z" fill="#f2e36b" stroke="#444" />
                <path d="M5 6h5l1 2h3v6H5z" fill="#f2e36b" stroke="#444" />
                <path d="M9 10h5l1 2h3v6H9z" fill="#f6e25d" stroke="#444" />
              </svg>
            </NavTab>
          </NavTabs>
          <NavTitle>模型树</NavTitle>
          <NavBody>
            <TreeBox>
              {tree.map(([icon, label, expand, root]) => (
                <TreeRow key={label} $root={root}>
                  {expand && <Expander>+</Expander>}
                  <TreeIcon>
                    <svg width="18" height="18" viewBox="0 0 18 18" fill="none">{treeIcons[icon]}</svg>
                  </TreeIcon>
                  <TreeText>{label}</TreeText>
                </TreeRow>
              ))}
            </TreeBox>
            <ScrollTrack>
              <ScrollThumb />
            </ScrollTrack>
          </NavBody>
        </Navigator>
        <Sash>
          <SashPanel $top={234} $h={93} />
          <SashPanel $top={337} $h={93} $dark />
        </Sash>
        <Viewport />
      </Work>
      <ModelLayer>
        <ModelDrawing />
      </ModelLayer>
      <OptionsPopup>
        <SelectBox>
          平移
          <svg width="7" height="5" viewBox="0 0 7 5"><path d="M0 0h7L3.500 5z" fill="#222" /></svg>
        </SelectBox>
        <FieldLabel>方向参照</FieldLabel>
        <RefInput>曲面<em>:F62</em>(拉伸<em>_16</em>)</RefInput>
        <FieldLabel $top={5}>展开区域</FieldLabel>
        <RadioRow><Radio $on />整个曲面</RadioRow>
        <RadioRow><Radio />草绘区域</RadioRow>
        <FieldLabel $muted $top={-1}>排除环</FieldLabel>
        <ExcludeBox />
      </OptionsPopup>
      <Watermark>
        <WaterLogo>
          <svg width="68" height="62" viewBox="0 0 68 62" fill="none">
            <path d="M42 34C36 14 22 3 12 6C0 8 2 22 10 27" stroke="#6b5f9f" strokeWidth="3" />
            <path d="M40 40C46 24 58 16 56 32C54 50 38 60 32 56C26 52 34 42 44 38" stroke="#a8405f" strokeWidth="2.200" />
            <path d="M40 36C28 34 12 36 12 44C12 52 24 48 34 42" stroke="#7a5f96" strokeWidth="2" />
          </svg>
        </WaterLogo>
        <WaterText>
          <WaterTitle>野火论坛</WaterTitle>
          <WaterUrl>www.proewildfire.cn</WaterUrl>
        </WaterText>
      </Watermark>
    </Page>
  );
}
